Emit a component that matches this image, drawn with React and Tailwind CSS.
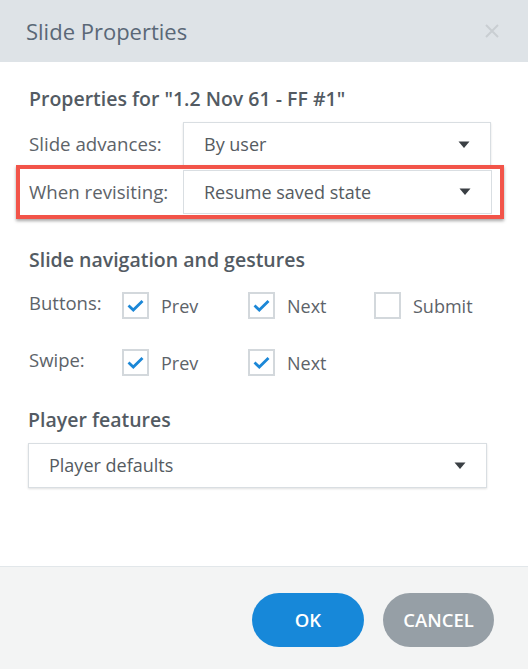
import React from "react";

const font = { fontFamily: '"Open Sans", "Noto Sans", sans-serif' };

function Caret() {
  return (
    <svg width="12" height="8" viewBox="0 0 12 8" className="shrink-0">
      <path d="M0.5 0.5 L11.5 0.5 L6 7 Z" fill="#3a3f44" />
    </svg>
  );
}

function Select({ value, className = "" }) {
  return (
    <div
      className={
        "flex items-center justify-between bg-white border border-[#d9dee2] shadow-[0_1px_2px_rgba(0,0,0,0.12)] pl-[20px] pr-[20px] text-[18px] text-[#555b61] " +
        className
      }
    >
      <span>{value}</span>
      <Caret />
    </div>
  );
}

function Check({ checked, label }) {
  return (
    <div className="flex items-center w-[126px] shrink-0">
      <div className="w-[27px] h-[27px] border-2 border-[#d3d8dc] bg-white flex items-center justify-center shrink-0">
        {checked && (
          <svg width="17" height="13" viewBox="0 0 17 13">
            <path d="M1.5 6.5 L6.3 11 L15.5 2" fill="none" stroke="#1b87d7" strokeWidth="2.8" />
          </svg>
        )}
      </div>
      <span className="ml-[12px] text-[18px] text-[#5d6369] mt-[3px]">{label}</span>
    </div>
  );
}

export default function App() {
  return (
    <div className="w-[528px] h-[669px] flex flex-col bg-white overflow-hidden" style={font}>
      <div className="h-[62px] shrink-0 bg-[#dee3e7] flex items-center justify-between pl-[26px] pr-[28px]">
        <span className="text-[22px] text-[#5a6877]">Slide Properties</span>
        <svg width="16" height="16" viewBox="0 0 16 16">
          <path d="M2 2 L14 14 M14 2 L2 14" stroke="#c9ced2" strokeWidth="2" />
        </svg>
      </div>

      <div className="flex-1 pl-[29px] pr-[37px] pt-[25px]">
        <div className="text-[19.5px] font-semibold text-[#535b63] leading-[24px]">
          Properties for "1.2 Nov 61 - FF #1"
        </div>

        <div className="flex items-center mt-[11px]">
          <span className="w-[154px] shrink-0 text-[18.7px] text-[#5d6369]">Slide advances:</span>
          <Select value="By user" className="flex-1 h-[45px]" />
        </div>

        <div className="relative -ml-[13px] -mr-[13px] -mt-[2px] border-[4px] border-[#f25449] shadow-[0_2px_3px_rgba(0,0,0,0.35)] flex items-center pl-[9px] pr-[8px] py-[1px]">
          <span className="w-[154px] shrink-0 text-[18.7px] text-[#5d6369]">When revisiting:</span>
          <Select value="Resume saved state" className="flex-1 h-[44px] shadow-none" />
        </div>

        <div className="mt-[29px] text-[19.5px] font-semibold text-[#535b63] leading-[24px]">
          Slide navigation and gestures
        </div>

        <div className="flex items-center mt-[18px]">
          <span className="w-[93px] shrink-0 text-[18.5px] text-[#5d6369] -mt-[4px]">Buttons:</span>
          <Check checked label="Prev" />
          <Check checked label="Next" />
          <Check checked={false} label="Submit" />
        </div>

        <div className="flex items-center mt-[27px]">
          <span className="w-[93px] shrink-0 text-[18.5px] text-[#5d6369] -mt-[4px]">Swipe:</span>
          <Check checked label="Prev" />
          <Check checked label="Next" />
        </div>

        <div className="mt-[31px] -ml-[1px] text-[19.5px] font-semibold text-[#535b63] leading-[24px]">
          Player features
        </div>

        <Select value="Player defaults" className="mt-[11px] h-[45px] -ml-[1px] mr-[4px]" />
      </div>

      <div className="h-[103px] shrink-0 bg-[#f3f4f4] border-t border-[#e2e7ea] flex items-center justify-end gap-[19px] pr-[34px] pt-[4px]">
        <button className="w-[112px] h-[54px] rounded-full bg-[#1788d9] text-white text-[18.5px] font-semibold">
          OK
        </button>
        <button className="w-[111px] h-[54px] rounded-full bg-[#969fa6] text-white text-[18.5px] font-semibold">
          CANCEL
        </button>
      </div>
    </div>
  );
}
